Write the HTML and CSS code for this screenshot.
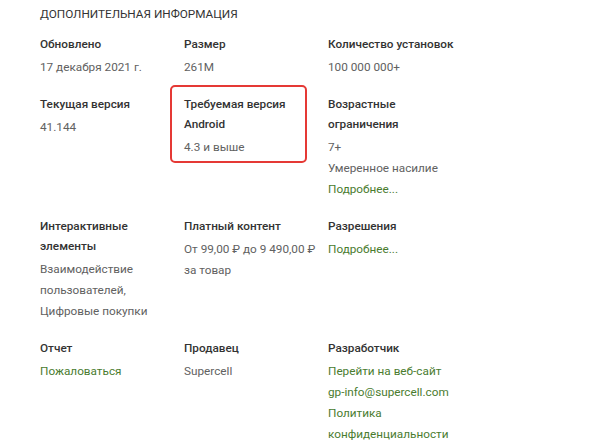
FILE: index.html
```html
<!DOCTYPE html>
<html lang="ru">
<head>
<meta charset="utf-8">
<title>Дополнительная информация</title>
<link rel="stylesheet" href="styles.css">
</head>
<body>
<section class="info">
  <h2 class="title">Дополнительная информация</h2>
  <div class="grid">
    <div class="cell">
      <div class="label">Обновлено</div>
      <div class="value">17 декабря 2021 г.</div>
    </div>
    <div class="cell">
      <div class="label">Размер</div>
      <div class="value">261M</div>
    </div>
    <div class="cell">
      <div class="label">Количество установок</div>
      <div class="value">100 000 000+</div>
    </div>

    <div class="cell">
      <div class="label">Текущая версия</div>
      <div class="value">41.144</div>
    </div>
    <div class="cell">
      <div class="label">Требуемая версия Android</div>
      <div class="value">4.3 и выше</div>
      <span class="mark"></span>
    </div>
    <div class="cell">
      <div class="label">Возрастные ограничения</div>
      <div class="value">7+</div>
      <div class="value">Умеренное насилие</div>
      <div class="value"><a class="link" href="#">Подробнее...</a></div>
    </div>

    <div class="cell">
      <div class="label">Интерактивные элементы</div>
      <div class="value">Взаимодействие пользователей, Цифровые покупки</div>
    </div>
    <div class="cell">
      <div class="label">Платный контент</div>
      <div class="value">От 99,00 ₽ до 9&nbsp;490,00 ₽ за товар</div>
    </div>
    <div class="cell">
      <div class="label">Разрешения</div>
      <div class="value"><a class="link" href="#">Подробнее...</a></div>
    </div>

    <div class="cell">
      <div class="label">Отчет</div>
      <div class="value"><a class="link" href="#">Пожаловаться</a></div>
    </div>
    <div class="cell">
      <div class="label">Продавец</div>
      <div class="value">Supercell</div>
    </div>
    <div class="cell">
      <div class="label">Разработчик</div>
      <div class="value"><a class="link" href="#">Перейти на веб-сайт</a></div>
      <div class="value"><a class="link nowrap" href="#">gp-info@supercell.com</a></div>
      <div class="value"><a class="link" href="#">Политика конфиденциальности</a></div>
    </div>
  </div>
</section>
</body>
</html>
```

FILE: styles.css
```css
html, body {
  margin: 0;
  padding: 0;
  background: #ffffff;
}

body {
  font-family: Roboto, "Noto Sans", Arial, sans-serif;
  font-size: 11.75px;
  color: #333333;
}

.info {
  padding: 4px 0 0 40px;
}

.title {
  margin: 0 0 9.5px 0;
  font-size: 11.75px;
  font-weight: 400;
  line-height: 20px;
  text-transform: uppercase;
  color: #333333;
}

.grid {
  display: grid;
  grid-template-columns: 144px 144px 144px;
  align-items: start;
  row-gap: 16px;
}

.cell {
  position: relative;
  padding-right: 10px;
}

.label {
  font-weight: 500;
  line-height: 20px;
  color: #333333;
  margin-bottom: 3px;
}

.value {
  line-height: 21px;
  color: #616161;
}

.link {
  color: #4a7c2f;
  text-decoration: none;
}

.nowrap {
  white-space: nowrap;
}

.mark {
  position: absolute;
  left: -14px;
  top: -9px;
  width: 137px;
  bottom: -5px;
  box-sizing: border-box;
  border: 2.5px solid #e53935;
  border-radius: 5px;
}
```
